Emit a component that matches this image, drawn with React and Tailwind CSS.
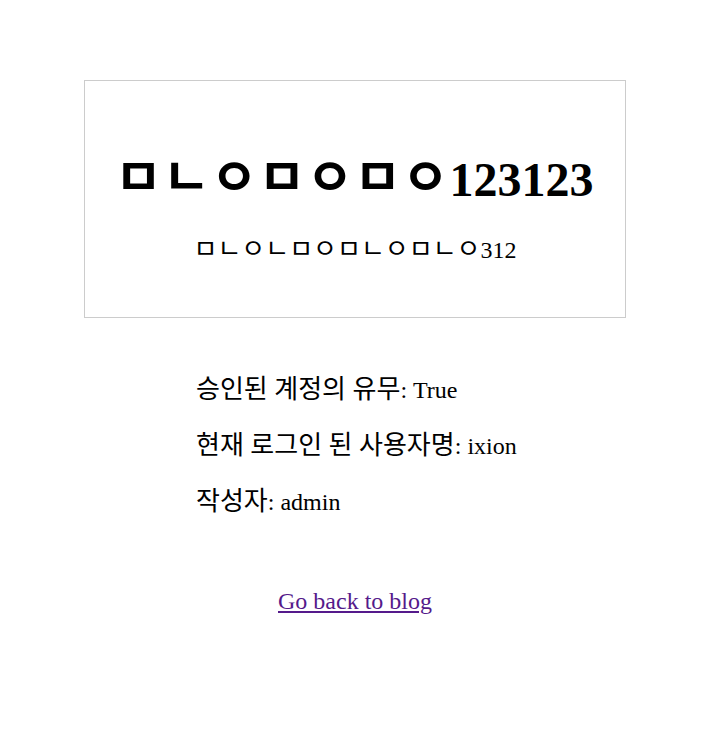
import React from "react";

export default function App() {
  const info = [
    ["승인된 계정의 유무", "True"],
    ["현재 로그인 된 사용자명", "ixion"],
    ["작성자", "admin"],
  ];

  return (
    <div className="min-h-screen bg-white pt-[80px] text-black font-['Liberation_Serif','Noto_Sans_CJK_KR',serif]">
      {/* post header */}
      <div className="ml-[84px] flex h-[238px] w-[542px] flex-col items-center border border-[#cccccc] pt-[70px]">
        <h1 className="pr-[2px] text-[48px] leading-[56px] font-bold">
          <span className="text-[52px] leading-[56px]">ㅁㄴㅇㅁㅇㅁㅇ</span>123123
        </h1>
        <h2 className="mt-[28px] text-[24px] leading-[28px]">
          <span className="text-[26px] leading-[28px]">ㅁㄴㅇㄴㅁㅇㅁㄴㅇㅁㄴㅇ</span>312
        </h2>
      </div>

      <div className="ml-[196px] mt-[58px] flex flex-col gap-[28px]">
        {info.map(([label, value]) => (
          <p key={label} className="text-[24px] leading-[28px]">
            <span className="text-[26px] leading-[28px]">{label}</span>: {value}
          </p>
        ))}
      </div>

      <div className="mt-[71px] flex w-[710px] justify-center">
        <a href="#" className="text-[24px] leading-[28px] text-[#551a8b] underline">
          Go back to blog
        </a>
      </div>
    </div>
  );
}
